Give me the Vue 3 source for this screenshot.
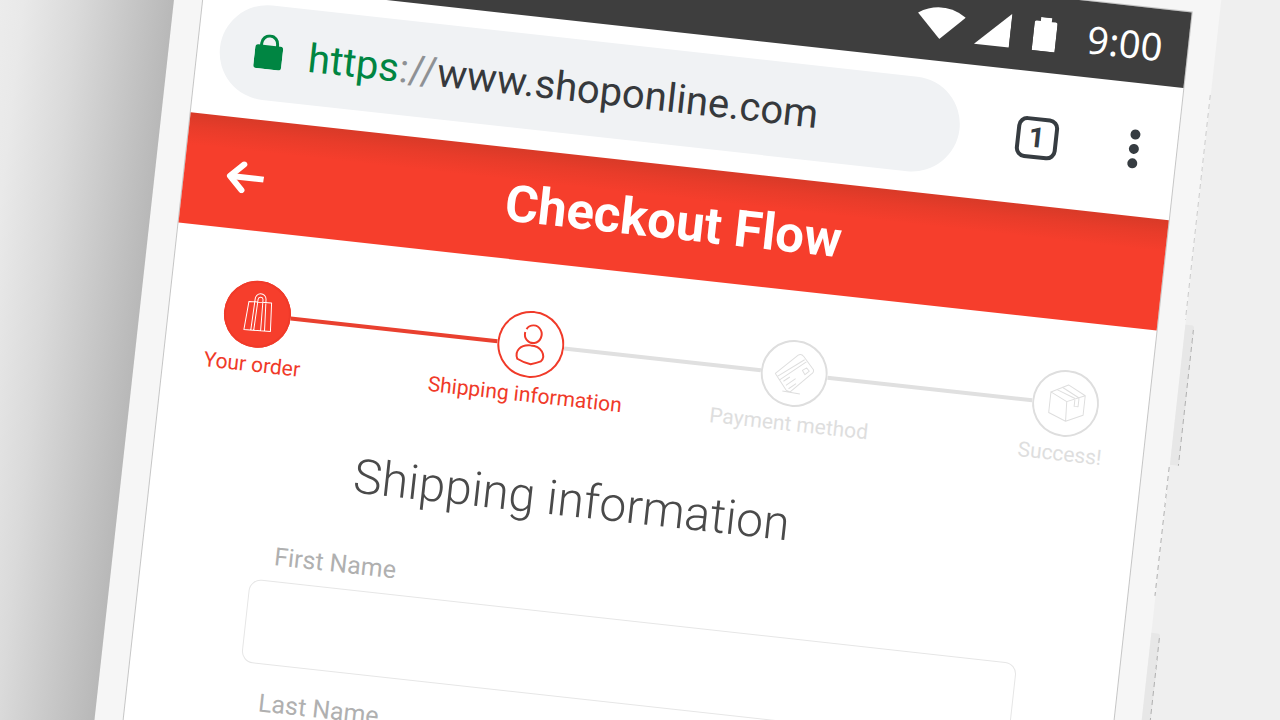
<script setup>
const steps = [
  { label: 'Your order', icon: 'bag', state: 'done', line: 'active', grow: 207 },
  { label: 'Shipping information', icon: 'person', state: 'current', line: 'idle', grow: 198 },
  { label: 'Payment method', icon: 'card', state: 'todo', line: 'idle', grow: 205 },
  { label: 'Success!', icon: 'box', state: 'todo' },
]
const fields = [
  { id: 'first-name', label: 'First Name' },
  { id: 'last-name', label: 'Last Name' },
]
</script>

<template>
  <main class="stage">
    <div class="phone">
      <div class="shade"></div>
      <span class="key key-power"></span>
      <span class="key key-volume"></span>
      <span class="edge edge-top"></span>
      <span class="edge edge-mid"></span>

      <div class="screen">
        <div class="status">
          <svg class="wifi" width="48" height="32" viewBox="0 0 48 32"><path d="M0 8Q24-7 48 8L24 32Z" /></svg>
          <svg class="signal" width="35" height="35" viewBox="0 0 35 35"><path d="M35 0V34H0Z" /></svg>
          <svg class="battery" width="23" height="34" viewBox="0 0 23 34"><path d="M6 0H17V4H21Q23 4 23 6V34H0V6Q0 4 2 4H6Z" /></svg>
          <time class="clock">9:00</time>
        </div>

        <div class="browser">
          <div class="address">
            <svg width="28" height="35" viewBox="0 0 28 35">
              <path d="M6 14V9.500a8 8 0 0 1 16 0V14" fill="none" stroke="#008542" stroke-width="3" />
              <rect y="11" width="28" height="24" rx="3" fill="#008542" />
            </svg>
            <a class="url" href="#"><span class="secure">https</span><span class="slashes">://</span>www.shoponline.com</a>
          </div>
          <button class="tabs" type="button" aria-label="Open tabs">1</button>
          <button class="menu" type="button" aria-label="Menu">
            <svg width="11" height="40" viewBox="0 0 11 40" fill="#363c41">
              <circle cx="5.500" cy="5.500" r="5" /><circle cx="5.500" cy="20" r="5" /><circle cx="5.500" cy="34.500" r="5" />
            </svg>
          </button>
        </div>

        <header class="header">
          <button class="back" type="button" aria-label="Back">
            <svg width="38" height="32" viewBox="0 0 38 32" fill="none" stroke="#fff" stroke-width="6" stroke-linejoin="round">
              <path d="M17 3L4 16L17 29" stroke-linecap="round" /><path d="M5 16H38" />
            </svg>
          </button>
          <h1>Checkout Flow</h1>
        </header>

        <ol class="steps">
          <template v-for="step in steps" :key="step.label">
            <li class="step" :class="step.state">
              <span class="disc">
                <svg v-if="step.icon === 'bag'" width="67" height="67" viewBox="0 0 68 68">
                  <path d="M24 22L47 21L49 50L22 51ZM29 51L30 19a5.500 5.500 0 0 1 11-1L43 50M32 51L33 19a2.500 2.500 0 0 1 5 0L39 50" />
                </svg>
                <svg v-else-if="step.icon === 'person'" width="67" height="67" viewBox="0 0 68 68">
                  <path d="M28 19a8.500 9 0 1 1-1 3M34 35C45 34 51 44 46 50Q42 52 36 54Q28 53 22 50C18 42 24 35 34 35Z" />
                </svg>
                <svg v-else-if="step.icon === 'card'" width="67" height="67" viewBox="0 0 68 68">
                  <path d="M15 36L36 15Q39 13 42 16L53 28Q54 31 51 33L32 53L28 52L15 36ZM17 39L43 19M20 42L45 21M42 30l4-3 3 3-4 4ZM24 43l6-5M27 47l9-8M30 50l7-6M24 53L42 54" />
                </svg>
                <svg v-else width="67" height="67" viewBox="0 0 68 68">
                  <path d="M18 24L35 15L53 24L35 32ZM18 24V45L36 52L35 32M36 52L53 44V24M24 21L43 28M29 18L47 27V36H43V28" />
                </svg>
              </span>
              <span class="caption">{{ step.label }}</span>
            </li>
            <li v-if="step.line" class="line" :class="step.line" :style="{ flexGrow: step.grow }" aria-hidden="true"></li>
          </template>
        </ol>

        <form class="form">
          <h2>Shipping information</h2>
          <div v-for="field in fields" :key="field.id" class="field">
            <label :for="field.id">{{ field.label }}</label>
            <input :id="field.id" type="text" />
          </div>
        </form>
      </div>
    </div>
  </main>
</template>

<style>
body {
  margin: 0;
}
</style>

<style scoped>
* {
  box-sizing: border-box;
}
.stage {
  position: relative;
  height: 100vh;
  overflow: hidden;
  background: #efefef;
  font-family: Roboto, "Liberation Sans", sans-serif;
}
.phone {
  position: absolute;
  top: -218px;
  left: 198px;
  width: 81.3%;
  padding: 120px 28px 60px 29px;
  background: #f6f6f6;
  transform: rotate(6.3deg);
  transform-origin: 0 0;
}
.shade {
  position: absolute;
  top: 0;
  bottom: -200px;
  right: 100%;
  width: 200px;
  background: linear-gradient(to left, #b8b8b8, #c6c6c6 20%, #dadada 48%, #e9e9e9 75%, #efefef);
}
.key {
  position: absolute;
  left: 100%;
  width: 9px;
  background: #e7e7e7;
  border-radius: 0 3px 0 0;
}
.key-power {
  top: 431px;
  height: 141px;
}
.key-volume {
  top: 741px;
  height: 160px;
}
.key::after,
.edge {
  position: absolute;
  width: 1px;
  background: repeating-linear-gradient(#b0b0b0 0 5px, transparent 5px 9px);
}
.key::after {
  content: "";
  top: 4px;
  right: 0;
  bottom: 0;
}
.edge {
  right: 0;
}
.edge-top {
  top: 200px;
  height: 226px;
  opacity: 0.6;
}
.edge-mid {
  top: 574px;
  height: 130px;
}
.screen {
  background: #fff;
  box-shadow: 0 0 0 1px #c6c6c6;
}
.status {
  display: flex;
  align-items: center;
  height: 76px;
  padding-right: 25px;
  background: #3e3e3e;
  fill: #fff;
}
.wifi {
  margin-left: auto;
}
.signal {
  margin-left: 11px;
}
.battery {
  margin-left: 23px;
}
.clock {
  margin-left: 31px;
  color: #fff;
  font-family: "Noto Sans", sans-serif;
  font-size: 38px;
  line-height: 46px;
  padding-bottom: 2px;
  font-weight: 400;
}
.browser {
  display: flex;
  align-items: center;
  height: 133px;
  padding: 0 30px 2px 22px;
}
.address {
  flex: 1;
  display: flex;
  align-items: center;
  gap: 26px;
  height: 95px;
  padding: 0 0 2px 35px;
  border-radius: 48px;
  background: #f0f2f4;
}
.url {
  padding-top: 5px;
  color: #36393c;
  font-size: 40px;
  line-height: 48px;
  text-decoration: none;
  white-space: nowrap;
}
.secure {
  color: #008542;
}
.slashes {
  color: #8e9194;
}
button {
  padding: 0;
  border: 0;
  background: none;
  font-family: inherit;
}
.tabs {
  width: 42px;
  height: 42px;
  margin-left: 57px;
  border: 4px solid #363c41;
  border-radius: 10px;
  color: #363c41;
  font-size: 28px;
  line-height: 32px;
  font-weight: 700;
}
.menu {
  display: flex;
  justify-content: center;
  width: 25px;
  margin-left: 64px;
}
.header {
  display: grid;
  grid-template-columns: 80px 1fr 80px;
  align-items: center;
  height: 111px;
  background: linear-gradient(#d83a28, #e83c2a 14px, #f63e2c 32px);
}
.back {
  display: flex;
  justify-content: flex-end;
  padding-top: 6px;
}
h1 {
  margin: 0;
  color: #fff;
  font-size: 51px;
  line-height: 60px;
  font-weight: 700;
  text-align: center;
}
.steps {
  display: flex;
  align-items: flex-start;
  margin: 0;
  padding: 49px 49px 0 55px;
  list-style: none;
}
.step {
  display: flex;
  flex-direction: column;
  align-items: center;
  gap: 4px;
  width: 67px;
  color: #f03a29;
}
.disc {
  display: flex;
  border-radius: 50%;
  box-shadow: inset 0 0 0 2px currentColor;
}
.disc svg {
  fill: none;
  stroke: currentColor;
  stroke-width: 2;
  stroke-linejoin: round;
}
.done .disc {
  background: #f63e2c;
}
.done svg {
  stroke: #fff;
  stroke-width: 1;
}
.todo {
  color: #dedede;
}
.todo svg {
  stroke-width: 1;
}
.caption {
  font-size: 21px;
  line-height: 26px;
  white-space: nowrap;
}
.line {
  flex: 1 1 0;
  height: 4px;
  margin-top: 32px;
  background: #e0e0e0;
}
.line.active {
  background: #e9402f;
}
.form {
  padding: 57px 102px 40px 110px;
}
h2 {
  margin: 0 0 40px 92px;
  color: #4a4a4a;
  font-size: 48px;
  line-height: 60px;
  font-weight: 300;
}
.field {
  display: flex;
  flex-direction: column;
  margin-bottom: 20px;
}
label {
  margin-left: 22px;
  padding-bottom: 5px;
  color: #b0b0b0;
  font-size: 25px;
  line-height: 38px;
}
input {
  width: 100%;
  height: 84px;
  padding: 0 22px;
  border: 1px solid #e6e6e6;
  border-radius: 12px;
  background: #fff;
  font: inherit;
  font-size: 26px;
}
</style>
